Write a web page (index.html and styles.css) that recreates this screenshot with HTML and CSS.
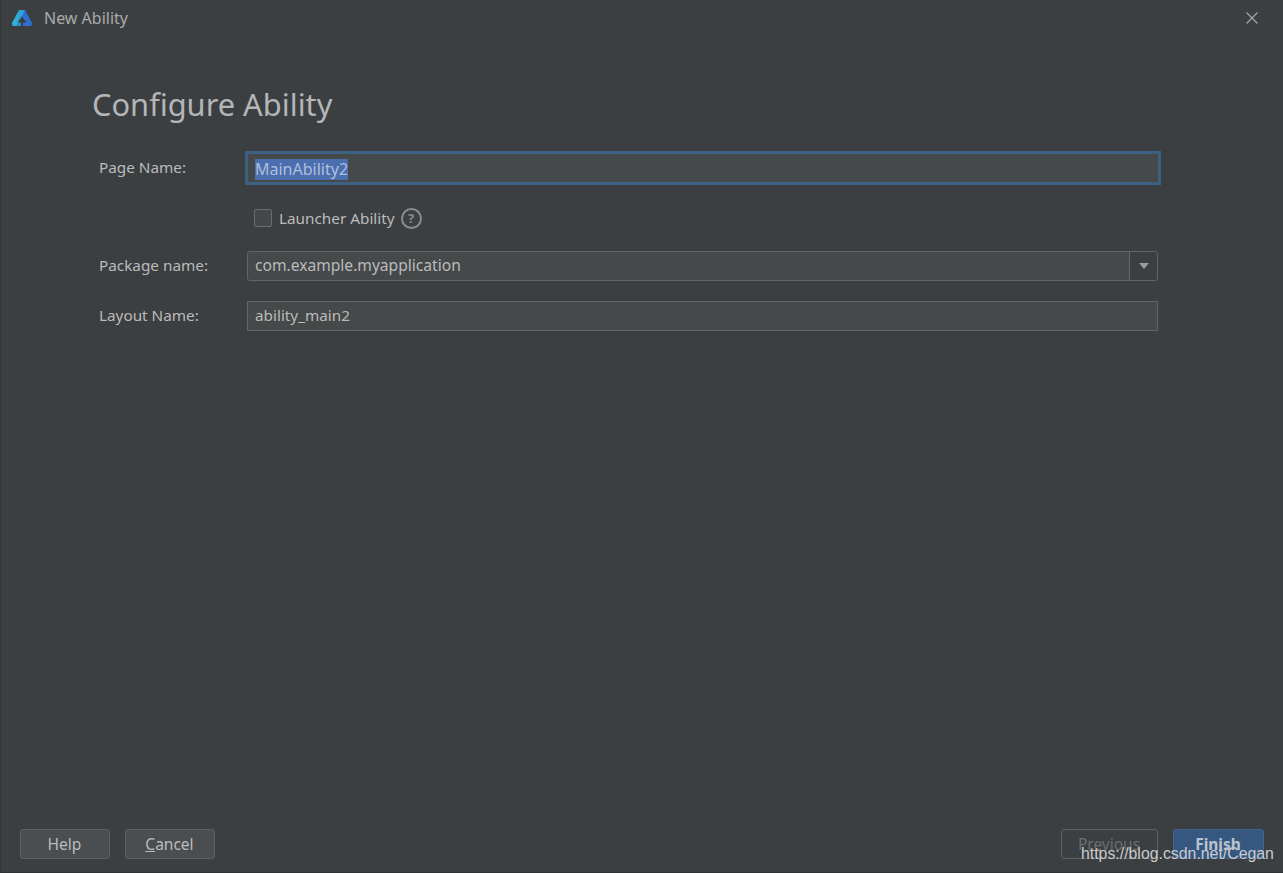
FILE: index.html
```html
<!DOCTYPE html>
<html lang="en">
<head>
    <meta charset="UTF-8">
    <title>New Ability</title>
    <link rel="stylesheet" href="styles.css">
</head>
<body>
    <div class="dialog">
        <!-- Title bar -->
        <header class="title-bar">
            <svg class="app-logo" width="22" height="18" viewBox="0 0 22 18">
                <defs>
                    <linearGradient id="logoLeft" x1="0" y1="0" x2="1" y2="0">
                        <stop offset="0" stop-color="#32b4d8"/>
                        <stop offset="1" stop-color="#2a9ad8"/>
                    </linearGradient>
                </defs>
                <path d="M13 1 H14 L20.8 13.5 Q21.5 17 19 17 H11 V6 Z" fill="#2f6fd0"/>
                <path d="M8 1 H14 L11.5 6 L6 17 H3 Q0.5 17 1.2 13.5 Z" fill="url(#logoLeft)"/>
                <path d="M6 17 L8 13 H11 V17 Z" fill="#2a8fd6"/>
                <path d="M11 7.5 L15.5 13.5 H12 V17 H10 V13.5 H6.5 Z" fill="#3c3f41"/>
            </svg>
            <span class="dialog-name">New Ability</span>
            <svg class="close-icon" width="12" height="12" viewBox="0 0 12 12">
                <path d="M0.5 0.5 L11.5 11.5 M11.5 0.5 L0.5 11.5" stroke="#a4a6a8" stroke-width="1.2"/>
            </svg>
        </header>

        <!-- Form -->
        <main class="content">
            <h1 class="page-title">Configure Ability</h1>
            <div class="form">
                <div class="form-row">
                    <label class="form-label label-focus">Page Name:</label>
                    <div class="field field-focus"><span class="selected">MainAbility2</span></div>
                </div>
                <div class="form-row check-row">
                    <span class="form-label"></span>
                    <span class="checkbox"></span>
                    <span class="check-text">Launcher Ability</span>
                    <span class="help-icon">?</span>
                </div>
                <div class="form-row package-row">
                    <label class="form-label label-raised">Package name:</label>
                    <div class="field field-combo">
                        <span class="combo-value">com.example.myapplication</span>
                        <span class="combo-arrow"><i class="arrow"></i></span>
                    </div>
                </div>
                <div class="form-row layout-row">
                    <label class="form-label label-raised">Layout Name:</label>
                    <div class="field">ability_main2</div>
                </div>
            </div>
        </main>

        <!-- Buttons -->
        <footer class="button-bar">
            <button class="btn">Help</button>
            <button class="btn"><u>C</u>ancel</button>
            <span class="spacer"></span>
            <button class="btn btn-disabled">Previous</button>
            <button class="btn btn-primary">Finish</button>
        </footer>
    </div>
    <div class="watermark">https://blog.csdn.net/Cegan</div>
</body>
</html>
```

FILE: styles.css
```css
body {
    margin: 0;
    height: 873px;
    overflow: hidden;
    background-color: #3c3f41;
    color: #bbbbbb;
    font-family: "Noto Sans", "Open Sans", sans-serif;
    font-size: 15.3px;
}

.dialog {
    display: flex;
    flex-direction: column;
    height: 873px;
    box-sizing: border-box;
    border-left: 1px solid #323436;
    border-bottom: 1px solid #2f3133;
}

.title-bar {
    display: flex;
    align-items: center;
    height: 36px;
    padding: 0 25px 0 10px;
    flex-shrink: 0;
}

.dialog-name {
    margin-left: 11px;
    flex: 1;
    color: #a9abad;
    font-size: 16px;
}

.content {
    flex: 1;
    padding: 0 125px 0 91px;
}

.page-title {
    margin: 48px 0 29px;
    font-size: 30.8px;
    font-weight: 400;
    line-height: 40px;
    color: #b4b6b8;
}

.form {
    padding-left: 7px;
}

.form-row {
    display: flex;
    align-items: center;
    height: 30px;
}

.form-label {
    width: 148px;
    flex-shrink: 0;
}

.label-focus {
    padding-bottom: 2px;
}

.label-raised {
    padding-bottom: 3px;
}

.field {
    flex: 1;
    height: 30px;
    box-sizing: border-box;
    padding: 0 7px;
    line-height: 27px;
    background-color: #45494a;
    border: 1px solid #646464;
}

.field-focus {
    margin-right: -1px;
    border: 1px solid #3d6185;
    box-shadow: 0 0 0 2px #3d6185;
    padding-top: 2px;
    font-size: 16px;
}

.selected {
    display: inline-block;
    height: 21px;
    line-height: 21px;
    background-color: #4b6eaf;
    color: #b0bfdb;
}

.check-row {
    margin-top: 20px;
}

.checkbox {
    width: 16px;
    height: 16px;
    margin-left: 7px;
    background-color: #43494a;
    border: 1px solid #6b6b6b;
    border-radius: 2px;
}

.check-text {
    margin-left: 7px;
}

.help-icon {
    width: 17px;
    height: 17px;
    margin-left: 6px;
    border: 2px solid #8a8c8e;
    border-radius: 50%;
    color: #8a8c8e;
    font-size: 13px;
    font-weight: 700;
    line-height: 17px;
    text-align: center;
}

.package-row {
    margin-top: 18px;
}

.layout-row {
    margin-top: 20px;
}

.field-combo {
    display: flex;
    padding: 0;
    border-radius: 3px;
    font-size: 15.6px;
}

.combo-value {
    flex: 1;
    padding-left: 7px;
}

.combo-arrow {
    display: flex;
    align-items: center;
    justify-content: center;
    width: 27px;
    background-color: #3c3f41;
    border-left: 1px solid #646464;
    border-radius: 0 3px 3px 0;
}

.arrow {
    border-left: 5px solid transparent;
    border-right: 5px solid transparent;
    border-top: 6px solid #9a9c9e;
}

.button-bar {
    display: flex;
    gap: 15px;
    padding: 0 19px 13px 19px;
}

.spacer {
    flex: 1;
}

.btn {
    width: 90px;
    height: 30px;
    padding: 0 1px 0 0;
    box-sizing: border-box;
    background-color: #4a4e50;
    border: 1px solid #5e6060;
    border-radius: 3px;
    color: #bbbbbb;
    font-family: inherit;
    font-size: 15.5px;
}

.btn-disabled {
    width: 97px;
    background: none;
    color: #6b6d6f;
}

.btn-primary {
    width: 91px;
    background-color: #365880;
    border-color: #3f6490;
    color: #b9c3cf;
    font-weight: 700;
}

.watermark {
    position: absolute;
    left: 1081px;
    top: 844px;
    font-family: "Liberation Sans", Arial, sans-serif;
    font-size: 15.85px;
    line-height: 20px;
    color: #c9cbcc;
    white-space: nowrap;
}
```
